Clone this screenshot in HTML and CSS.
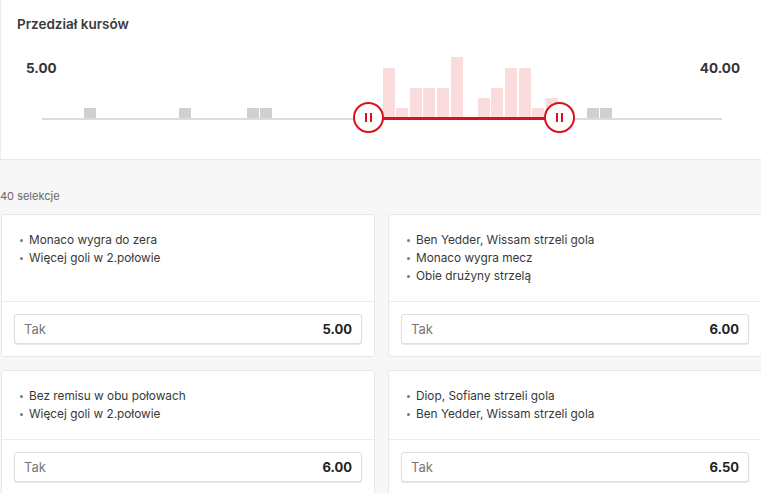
FILE: index.html
```
<!DOCTYPE html>
<html>
  <head>
    <meta name="viewport" content="width=device-width, initial-scale=1" />
    <link rel="stylesheet" href="styles.css">
  </head>
  <body>
    <section class="range-panel">
      <h3 class="range-title">Przedział kursów</h3>

      <div class="range-area">
        <div class="range-labels">
          <span>5.00</span>
          <span>40.00</span>
        </div>

        <div class="range-slider">
          <div class="histogram">
            <span class="bin"></span>
            <span class="bin"></span>
            <span class="bin"></span>
            <span class="bin off" style="height:10px"></span>
            <span class="bin"></span>
            <span class="bin"></span>
            <span class="bin"></span>
            <span class="bin"></span>
            <span class="bin"></span>
            <span class="bin"></span>
            <span class="bin off" style="height:10px"></span>
            <span class="bin"></span>
            <span class="bin"></span>
            <span class="bin"></span>
            <span class="bin"></span>
            <span class="bin off" style="height:10px"></span>
            <span class="bin off" style="height:10px"></span>
            <span class="bin"></span>
            <span class="bin"></span>
            <span class="bin"></span>
            <span class="bin"></span>
            <span class="bin"></span>
            <span class="bin"></span>
            <span class="bin"></span>
            <span class="bin"></span>
            <span class="bin on" style="height:50px"></span>
            <span class="bin on" style="height:10px"></span>
            <span class="bin on" style="height:30px"></span>
            <span class="bin on" style="height:30px"></span>
            <span class="bin on" style="height:30px"></span>
            <span class="bin on" style="height:61px"></span>
            <span class="bin"></span>
            <span class="bin on" style="height:20px"></span>
            <span class="bin on" style="height:30px"></span>
            <span class="bin on" style="height:50px"></span>
            <span class="bin on" style="height:50px"></span>
            <span class="bin on" style="height:10px"></span>
            <span class="bin on" style="height:20px"></span>
            <span class="bin"></span>
            <span class="bin"></span>
            <span class="bin off" style="height:10px"></span>
            <span class="bin off" style="height:10px"></span>
            <span class="bin"></span>
            <span class="bin"></span>
            <span class="bin"></span>
            <span class="bin"></span>
            <span class="bin"></span>
            <span class="bin"></span>
            <span class="bin"></span>
            <span class="bin"></span>
          </div>

          <div class="track">
            <div class="track-fill" style="left:48%;width:28.1%"></div>
          </div>
          <button class="handle" style="left:48%"><i></i><i></i></button>
          <button class="handle" style="left:76.1%"><i></i><i></i></button>
        </div>
      </div>
    </section>

    <p class="count">40 selekcje</p>

    <div class="cards">
      <div class="card">
        <ul class="card-list">
          <li>Monaco wygra do zera</li>
          <li>Więcej goli w 2.połowie</li>
        </ul>
        <div class="card-foot">
          <button class="odd"><span class="odd-name">Tak</span><b>5.00</b></button>
        </div>
      </div>

      <div class="card">
        <ul class="card-list">
          <li>Ben Yedder, Wissam strzeli gola</li>
          <li>Monaco wygra mecz</li>
          <li>Obie drużyny strzelą</li>
        </ul>
        <div class="card-foot">
          <button class="odd"><span class="odd-name">Tak</span><b>6.00</b></button>
        </div>
      </div>

      <div class="card">
        <ul class="card-list">
          <li>Bez remisu w obu połowach</li>
          <li>Więcej goli w 2.połowie</li>
        </ul>
        <div class="card-foot">
          <button class="odd"><span class="odd-name">Tak</span><b>6.00</b></button>
        </div>
      </div>

      <div class="card">
        <ul class="card-list">
          <li>Diop, Sofiane strzeli gola</li>
          <li>Ben Yedder, Wissam strzeli gola</li>
        </ul>
        <div class="card-foot">
          <button class="odd"><span class="odd-name">Tak</span><b>6.50</b></button>
        </div>
      </div>
    </div>
  </body>
</html>
```

FILE: styles.css
```
body {
  font-family: Inter, "Noto Sans", sans-serif;
  margin: 0;
  background-color: #f7f7f7;
  color: #333;
  overflow: hidden;
}

.range-panel {
  background-color: white;
  border-left: 1px solid #ececec;
  border-bottom: 1px solid #e8e8e8;
  height: 160px;
  padding: 14px 0 0 0;
  box-sizing: border-box;
}

.range-title {
  margin: 0 0 0 16px;
  font-size: 13.5px;
  line-height: 20px;
  font-weight: 600;
  color: #3a3a3a;
}

.range-area {
  display: grid;
  margin-top: 23px;
}

.range-labels,
.range-slider {
  grid-area: 1 / 1;
}

.range-labels {
  display: flex;
  justify-content: space-between;
  align-self: start;
  padding: 3px 21px 0 25px;
  font-size: 13.5px;
  line-height: 16px;
  font-weight: 700;
  color: #333;
}

.range-slider {
  position: relative;
  margin: 0 39px 0 41px;
}

.histogram {
  display: flex;
  align-items: flex-end;
  height: 61px;
}

.bin {
  flex: 1;
  margin: 0 0.8px;
}

.bin.off {
  background-color: #d0d0d0;
}

.bin.on {
  background-color: #fadcdc;
}

.track {
  position: relative;
  height: 2px;
  background-color: #dcdcdc;
}

.track-fill {
  position: absolute;
  top: -1px;
  height: 3px;
  background-color: #d8111b;
}

.handle {
  position: absolute;
  top: 45px;
  width: 31px;
  height: 31px;
  margin-left: -15.5px;
  padding: 0;
  border: 2px solid #d8111b;
  border-radius: 50%;
  background-color: white;
  display: flex;
  align-items: center;
  justify-content: center;
  gap: 2.5px;
  cursor: pointer;
}

.handle i {
  width: 2.5px;
  height: 9px;
  background-color: #d8111b;
}

.count {
  margin: 29px 0 11px 0;
  font-size: 11px;
  line-height: 14px;
  color: #666;
}

.cards {
  display: grid;
  grid-template-columns: 374px 374px;
  gap: 13px;
  padding-left: 1px;
}

.card {
  display: flex;
  flex-direction: column;
  background-color: white;
  border: 1px solid #e8e8e8;
  border-radius: 3px;
}

.card-list {
  flex: 1;
  margin: 0;
  padding: 16px 16px 16px 27px;
  font-size: 11.8px;
  line-height: 18px;
  color: #383838;
}

.card-list li {
  list-style: none;
  position: relative;
}

.card-list li::before {
  content: '';
  position: absolute;
  left: -9.5px;
  top: 7.5px;
  width: 3.5px;
  height: 3.5px;
  border-radius: 50%;
  background-color: #7a7a7a;
}

.card-foot {
  border-top: 1px solid #ececec;
  padding: 12px;
}

.odd {
  display: flex;
  justify-content: space-between;
  align-items: center;
  width: 100%;
  height: 30px;
  padding: 0 9px;
  background-color: white;
  border: 1px solid #dedede;
  border-radius: 3px;
  box-shadow: 0 1px 1px rgba(0, 0, 0, 0.1);
  font-family: inherit;
  cursor: pointer;
}

.odd-name {
  font-size: 13px;
  color: #777;
}

.odd b {
  font-size: 13px;
  color: #222;
}
```
